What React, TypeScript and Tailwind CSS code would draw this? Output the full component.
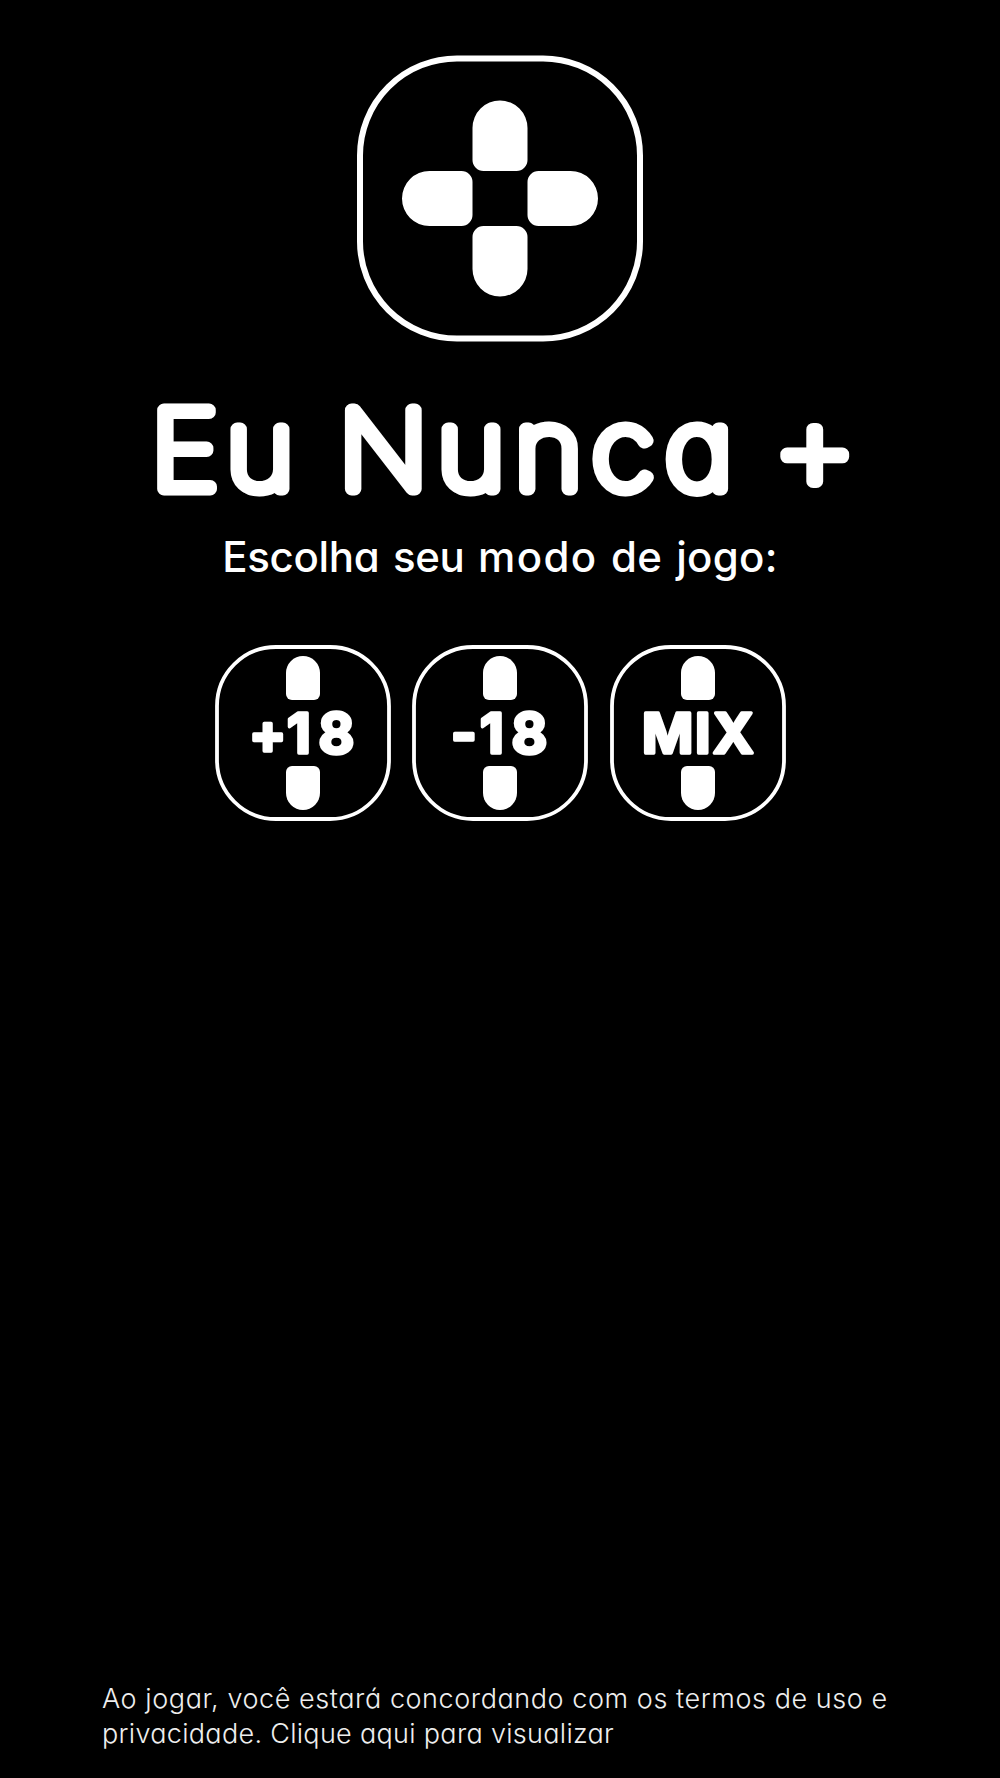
const Logo = () => {
  return (
    <svg
      className="h-[287px] w-[286px]"
      viewBox="0 0 286 287"
      fill="none"
      aria-hidden="true"
    >
      <rect x="3" y="3.5" width="280" height="280" rx="97" stroke="white" strokeWidth="6" />
      <g fill="white">
        <path d="M115.5 73a27.5 27.5 0 0 1 55 0v32a11 11 0 0 1-11 11h-33a11 11 0 0 1-11-11z" />
        <path d="M115.5 214a27.5 27.5 0 0 0 55 0v-32a11 11 0 0 0-11-11h-33a11 11 0 0 0-11 11z" />
        <path d="M72.5 116a27.5 27.5 0 0 0 0 55h32a11 11 0 0 0 11-11v-33a11 11 0 0 0-11-11z" />
        <path d="M213.5 116a27.5 27.5 0 0 1 0 55h-32a11 11 0 0 1-11-11v-33a11 11 0 0 1 11-11z" />
      </g>
    </svg>
  );
};

const Wordmark = () => {
  return (
    <svg
      className="h-[180px] w-[760px] overflow-visible font-['Inter',sans-serif] text-[109px] font-thin [font-feature-settings:'cv11']"
      viewBox="-30 -40 760 180"
      fill="white"
      stroke="white"
      strokeWidth="13"
      strokeLinejoin="round"
      strokeLinecap="round"
    >
      <text transform="scale(1.06 1)" x="1 72 130 178 271 344 417 486 560" y="96.5">
        Eu Nunca{" "}
        <tspan x="587" y="99" className="text-[126px]">
          +
        </tspan>
      </text>
    </svg>
  );
};

const ModeButton = ({ label, x }: { label: string; x: string }) => {
  return (
    <button aria-label={label}>
      <svg
        className="h-[176px] w-[176px] font-['Inter',sans-serif] text-[55px] font-bold"
        viewBox="0 0 176 176"
        fill="white"
      >
        <rect x="2" y="2" width="172" height="172" rx="59" fill="none" stroke="white" strokeWidth="3.8" />
        <path d="M71 28a17 17 0 0 1 34 0v21a6 6 0 0 1-6 6h-22a6 6 0 0 1-6-6z" />
        <path d="M71 148a17 17 0 0 0 34 0v-21a6 6 0 0 0-6-6h-22a6 6 0 0 0-6 6z" />
        <text x={x} y="107.5" stroke="white" strokeWidth="3.4" strokeLinejoin="round">
          {label}
        </text>
      </svg>
    </button>
  );
};

const modes = [
  { label: "+18", x: "34 72 103.5" },
  { label: "-18", x: "39 68 99.5" },
  { label: "MIX", x: "32 85 103" },
];

export default function App() {
  return (
    <div className="flex h-[1778px] w-[1000px] flex-col items-center bg-black pt-[55px] font-['Inter',sans-serif] text-white [font-feature-settings:'cv11']">
      <Logo />
      <h1 className="mt-[10px]">
        <Wordmark />
      </h1>
      <p className="text-[42px] leading-[50px] font-medium tracking-[-0.3px] whitespace-nowrap [word-spacing:2.5px]">
        Escolha seu <span className="tracking-[1.4px]">modo</span>{" "}
        <span className="tracking-[0.3px]">de jogo:</span>
      </p>
      <div className="mt-[63px] flex gap-[21.5px]">
        {modes.map((mode) => (
          <ModeButton key={mode.label} label={mode.label} x={mode.x} />
        ))}
      </div>
      <p className="mt-auto mb-[27px] w-[796px] text-[27px] leading-[35px] font-[330] whitespace-nowrap text-[#eeeeee]">
        <span className="tracking-[0.57px]">
          Ao jogar, você estará concordando com os termos de uso e
        </span>
        <br />
        <span className="tracking-[0.3px]">
          privacidade. Clique aqui para visualizar
        </span>
      </p>
    </div>
  );
}
